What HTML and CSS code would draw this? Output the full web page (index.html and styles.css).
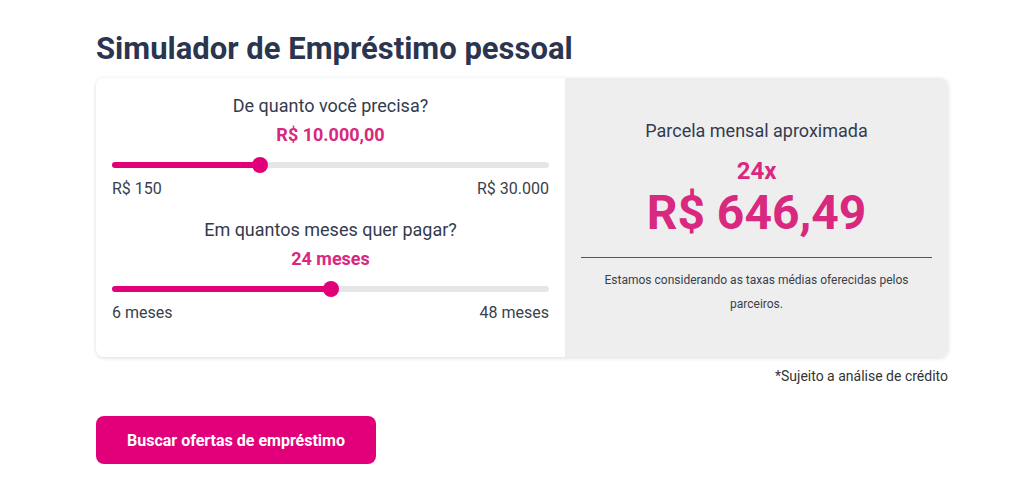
FILE: index.html
```html
<!DOCTYPE html>
<html lang="pt-BR">
<head>
<meta charset="utf-8">
<title>Simulador de Empréstimo pessoal</title>
<link rel="stylesheet" href="styles.css">
</head>
<body>
<main class="page">
  <h1 class="title">Simulador de Empréstimo pessoal</h1>
  <section class="card">
    <div class="inputs">
      <div class="field">
        <p class="question">De quanto você precisa?</p>
        <p class="value">R$ 10.000,00</p>
        <div class="slider">
          <div class="track"></div>
          <div class="fill" style="width: calc(8px + 33.33% - 5.33px)"></div>
          <div class="thumb" style="left: calc(33.33% - 5.33px)"></div>
        </div>
        <div class="limits"><span>R$ 150</span><span>R$ 30.000</span></div>
      </div>
      <div class="field field-second">
        <p class="question">Em quantos meses quer pagar?</p>
        <p class="value">24 meses</p>
        <div class="slider">
          <div class="track"></div>
          <div class="fill" style="width: calc(8px + 50% - 8px)"></div>
          <div class="thumb" style="left: calc(50% - 8px)"></div>
        </div>
        <div class="limits"><span>6 meses</span><span>48 meses</span></div>
      </div>
    </div>
    <div class="result">
      <p class="result-label">Parcela mensal aproximada</p>
      <p class="installments">24x</p>
      <p class="amount">R$ 646,49</p>
      <hr class="divider">
      <p class="note">Estamos considerando as taxas médias oferecidas pelos parceiros.</p>
    </div>
  </section>
  <p class="disclaimer">*Sujeito a análise de crédito</p>
  <button class="cta" type="button">Buscar ofertas de empréstimo</button>
</main>
</body>
</html>
```
FILE: styles.css
```css
* { box-sizing: border-box; }
body {
  margin: 0;
  background: #ffffff;
  font-family: Roboto, "Liberation Sans", Arial, sans-serif;
  color: #2d3748;
}
p { margin: 0; }
.page {
  width: 852px;
  margin-left: 96px;
  padding-top: 30px;
}
.title {
  margin: 0 0 10px;
  font-size: 31px;
  line-height: 38px;
  font-weight: 700;
  color: #2b3550;
}
.card {
  display: flex;
  border-radius: 8px;
  background: #fff;
  box-shadow: 0 1px 4px rgba(0,0,0,0.14);
}
.inputs {
  width: 469px;
  padding: 16px 16px 34px;
}
.field { display: flex; flex-direction: column; align-items: center; }
.field-second { margin-top: 19px; }
.question {
  font-size: 18px;
  line-height: 24px;
  color: #333b4f;
}
.value {
  margin-top: 5px;
  font-size: 18px;
  line-height: 24px;
  font-weight: 700;
  color: #d9287f;
}
.slider {
  position: relative;
  width: 100%;
  height: 16px;
  margin-top: 10px;
}
.track {
  position: absolute;
  left: 0; right: 0; top: 5px;
  height: 6px;
  border-radius: 3px;
  background: #e6e6e6;
}
.fill {
  position: absolute;
  left: 0; top: 5px;
  height: 6px;
  border-radius: 3px;
  background: #e2007a;
}
.thumb {
  position: absolute;
  top: 0;
  width: 16px;
  height: 16px;
  border-radius: 50%;
  background: #e2007a;
}
.limits {
  width: 100%;
  display: flex;
  justify-content: space-between;
  margin-top: 6px;
  font-size: 16px;
  line-height: 20px;
  color: #3a3f4b;
}
.result {
  flex: 1;
  display: flex;
  flex-direction: column;
  align-items: center;
  justify-content: center;
  padding: 0 16px;
  background: #eeeeee;
  border-radius: 0 8px 8px 0;
  text-align: center;
}
.result-label {
  font-size: 18px;
  line-height: 24px;
  color: #333b4f;
}
.installments {
  margin-top: 16px;
  font-size: 24px;
  line-height: 24px;
  font-weight: 700;
  color: #d9287f;
}
.amount {
  margin-top: 6px;
  font-size: 48px;
  line-height: 48px;
  font-weight: 700;
  color: #d9287f;
}
.divider {
  width: 100%;
  margin: 20px 0 0;
  border: 0;
  border-top: 1px solid #555;
}
.note {
  margin-top: 10px;
  font-size: 12px;
  line-height: 24px;
  color: #3a3f4b;
}
.disclaimer {
  margin-top: 10px;
  text-align: right;
  font-size: 14px;
  line-height: 18px;
  color: #333;
}
.cta {
  margin-top: 31px;
  width: 280px;
  height: 48px;
  border: 0;
  border-radius: 8px;
  background: #e2007a;
  color: #fff;
  font-family: Roboto, "Liberation Sans", Arial, sans-serif;
  font-size: 16px;
  font-weight: 700;
  cursor: pointer;
}
```
